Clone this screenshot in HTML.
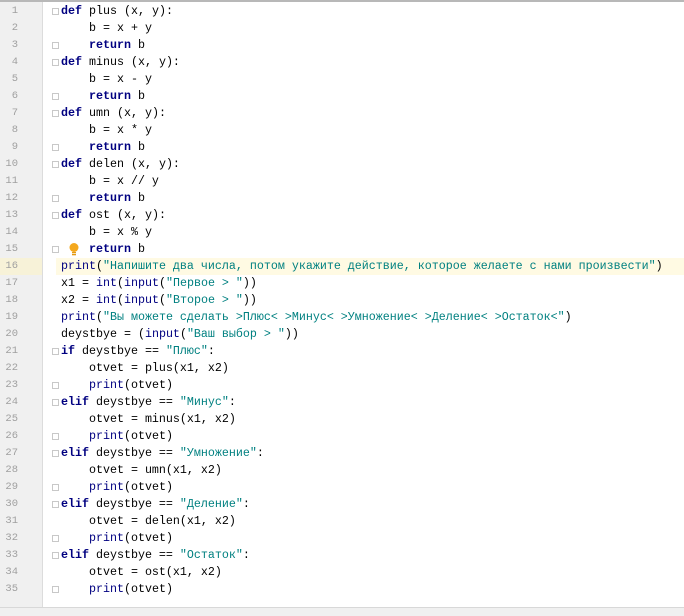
<!DOCTYPE html>
<html><head><meta charset="utf-8"><style>
html,body{margin:0;padding:0;width:684px;height:616px;overflow:hidden;background:#fff;}
body{position:relative;font-family:"Liberation Mono","DejaVu Sans Mono",monospace;font-size:11.67px;}
#gut{position:absolute;left:0;top:0;width:42px;height:608px;background:#f0f0f0;border-right:1px solid #dcdcdc;}
#topline{position:absolute;left:0;top:0;width:684px;height:2px;background:#b8b8b8;}
#bot{position:absolute;left:0;top:607px;width:684px;height:9px;background:#f0f0f0;border-top:1px solid #d8d8d8;}
.ln{position:absolute;left:0;width:18px;text-align:right;color:#a0a0a0;font-size:10.5px;line-height:17px;height:17px;}
.cl{position:absolute;left:61px;line-height:17px;height:17px;white-space:pre;color:#000;}
.k{color:#000080;font-weight:bold;}
.b{color:#000080;}
.s{color:#008080;}
#hl{position:absolute;left:56px;top:258px;width:628px;height:17px;background:#fffae3;}
#hlg{position:absolute;left:0;top:258px;width:42px;height:17px;background:#f7f2d8;}
.fold{position:absolute;left:52px;width:7px;height:7px;border:1px solid #c8c8c8;background:#fff;box-sizing:border-box;}
</style></head><body>
<div id="gut"></div>
<div id="hlg"></div>
<div id="hl"></div>
<div id="topline"></div>
<div id="bot"></div>
<div class="ln" style="top:3px">1</div>
<div class="ln" style="top:20px">2</div>
<div class="ln" style="top:37px">3</div>
<div class="ln" style="top:54px">4</div>
<div class="ln" style="top:71px">5</div>
<div class="ln" style="top:88px">6</div>
<div class="ln" style="top:105px">7</div>
<div class="ln" style="top:122px">8</div>
<div class="ln" style="top:139px">9</div>
<div class="ln" style="top:156px">10</div>
<div class="ln" style="top:173px">11</div>
<div class="ln" style="top:190px">12</div>
<div class="ln" style="top:207px">13</div>
<div class="ln" style="top:224px">14</div>
<div class="ln" style="top:241px">15</div>
<div class="ln" style="top:258px">16</div>
<div class="ln" style="top:275px">17</div>
<div class="ln" style="top:292px">18</div>
<div class="ln" style="top:309px">19</div>
<div class="ln" style="top:326px">20</div>
<div class="ln" style="top:343px">21</div>
<div class="ln" style="top:360px">22</div>
<div class="ln" style="top:377px">23</div>
<div class="ln" style="top:394px">24</div>
<div class="ln" style="top:411px">25</div>
<div class="ln" style="top:428px">26</div>
<div class="ln" style="top:445px">27</div>
<div class="ln" style="top:462px">28</div>
<div class="ln" style="top:479px">29</div>
<div class="ln" style="top:496px">30</div>
<div class="ln" style="top:513px">31</div>
<div class="ln" style="top:530px">32</div>
<div class="ln" style="top:547px">33</div>
<div class="ln" style="top:564px">34</div>
<div class="ln" style="top:581px">35</div>

<div class="fold" style="top:8px"></div>
<div class="fold" style="top:42px"></div>
<div class="fold" style="top:59px"></div>
<div class="fold" style="top:93px"></div>
<div class="fold" style="top:110px"></div>
<div class="fold" style="top:144px"></div>
<div class="fold" style="top:161px"></div>
<div class="fold" style="top:195px"></div>
<div class="fold" style="top:212px"></div>
<div class="fold" style="top:246px"></div>
<div class="fold" style="top:348px"></div>
<div class="fold" style="top:382px"></div>
<div class="fold" style="top:399px"></div>
<div class="fold" style="top:433px"></div>
<div class="fold" style="top:450px"></div>
<div class="fold" style="top:484px"></div>
<div class="fold" style="top:501px"></div>
<div class="fold" style="top:535px"></div>
<div class="fold" style="top:552px"></div>
<div class="fold" style="top:586px"></div>

<svg style="position:absolute;left:68px;top:242px" width="12" height="16" viewBox="0 0 12 16">
<circle cx="6" cy="5.5" r="4.5" fill="#f4a81d"/>
<rect x="4" y="10" width="4" height="1.3" fill="#e39a10"/>
<rect x="4" y="12" width="4" height="1.3" fill="#e39a10"/>
</svg>

<div class="cl" style="top:3px"><span class="k">def</span> plus (x, y):</div>
<div class="cl" style="top:20px">    b = x + y</div>
<div class="cl" style="top:37px">    <span class="k">return</span> b</div>
<div class="cl" style="top:54px"><span class="k">def</span> minus (x, y):</div>
<div class="cl" style="top:71px">    b = x - y</div>
<div class="cl" style="top:88px">    <span class="k">return</span> b</div>
<div class="cl" style="top:105px"><span class="k">def</span> umn (x, y):</div>
<div class="cl" style="top:122px">    b = x * y</div>
<div class="cl" style="top:139px">    <span class="k">return</span> b</div>
<div class="cl" style="top:156px"><span class="k">def</span> delen (x, y):</div>
<div class="cl" style="top:173px">    b = x // y</div>
<div class="cl" style="top:190px">    <span class="k">return</span> b</div>
<div class="cl" style="top:207px"><span class="k">def</span> ost (x, y):</div>
<div class="cl" style="top:224px">    b = x % y</div>
<div class="cl" style="top:241px">    <span class="k">return</span> b</div>
<div class="cl" style="top:258px"><span class="b">print</span>(<span class="s">"Напишите два числа, потом укажите действие, которое желаете с нами произвести"</span>)</div>
<div class="cl" style="top:275px">x1 = <span class="b">int</span>(<span class="b">input</span>(<span class="s">"Первое &gt; "</span>))</div>
<div class="cl" style="top:292px">x2 = <span class="b">int</span>(<span class="b">input</span>(<span class="s">"Второе &gt; "</span>))</div>
<div class="cl" style="top:309px"><span class="b">print</span>(<span class="s">"Вы можете сделать &gt;Плюс&lt; &gt;Минус&lt; &gt;Умножение&lt; &gt;Деление&lt; &gt;Остаток&lt;"</span>)</div>
<div class="cl" style="top:326px">deystbye = (<span class="b">input</span>(<span class="s">"Ваш выбор &gt; "</span>))</div>
<div class="cl" style="top:343px"><span class="k">if</span> deystbye == <span class="s">"Плюс"</span>:</div>
<div class="cl" style="top:360px">    otvet = plus(x1, x2)</div>
<div class="cl" style="top:377px">    <span class="b">print</span>(otvet)</div>
<div class="cl" style="top:394px"><span class="k">elif</span> deystbye == <span class="s">"Минус"</span>:</div>
<div class="cl" style="top:411px">    otvet = minus(x1, x2)</div>
<div class="cl" style="top:428px">    <span class="b">print</span>(otvet)</div>
<div class="cl" style="top:445px"><span class="k">elif</span> deystbye == <span class="s">"Умножение"</span>:</div>
<div class="cl" style="top:462px">    otvet = umn(x1, x2)</div>
<div class="cl" style="top:479px">    <span class="b">print</span>(otvet)</div>
<div class="cl" style="top:496px"><span class="k">elif</span> deystbye == <span class="s">"Деление"</span>:</div>
<div class="cl" style="top:513px">    otvet = delen(x1, x2)</div>
<div class="cl" style="top:530px">    <span class="b">print</span>(otvet)</div>
<div class="cl" style="top:547px"><span class="k">elif</span> deystbye == <span class="s">"Остаток"</span>:</div>
<div class="cl" style="top:564px">    otvet = ost(x1, x2)</div>
<div class="cl" style="top:581px">    <span class="b">print</span>(otvet)</div>
</body></html>
